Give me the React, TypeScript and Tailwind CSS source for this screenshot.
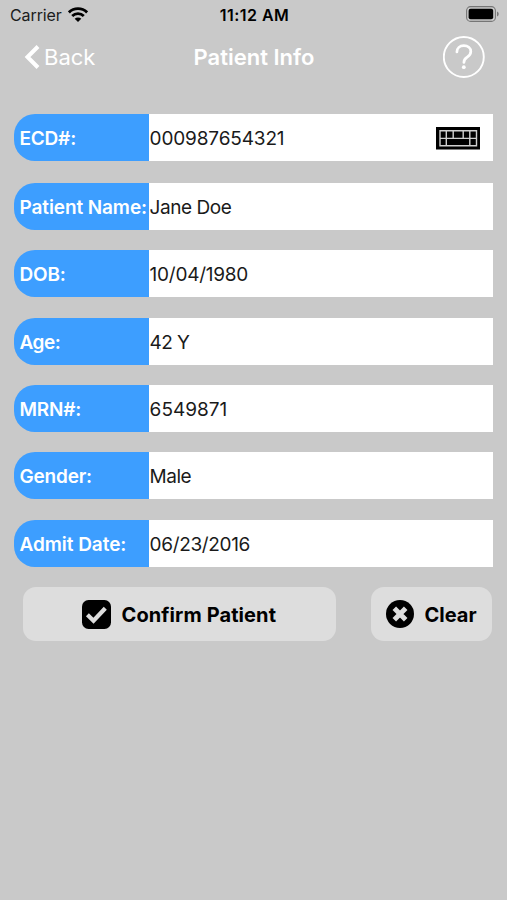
interface IField {
    label: string;
    value: string;
    gap: string;
    labelStyle: string;
    valueStyle: string;
    keyboard?: boolean;
}

const fields: IField[] = [
    { label: 'ECD#:', value: '000987654321', gap: '', labelStyle: 'tracking-[-0.2px]', valueStyle: 'tracking-[-0.15px]', keyboard: true },
    { label: 'Patient Name:', value: 'Jane Doe', gap: 'mt-[22px]', labelStyle: 'tracking-[-0.1px]', valueStyle: 'tracking-[-0.45px]' },
    { label: 'DOB:', value: '10/04/1980', gap: 'mt-5', labelStyle: 'tracking-[-0.2px]', valueStyle: 'tracking-[-0.25px]' },
    { label: 'Age:', value: '42 Y', gap: 'mt-[21px]', labelStyle: 'tracking-[-0.5px]', valueStyle: 'tracking-[-0.6px]' },
    { label: 'MRN#:', value: '6549871', gap: 'mt-5', labelStyle: 'tracking-[-0.2px]', valueStyle: '' },
    { label: 'Gender:', value: 'Male', gap: 'mt-5', labelStyle: 'tracking-[-0.2px]', valueStyle: 'tracking-[-0.5px]' },
    { label: 'Admit Date:', value: '06/23/2016', gap: 'mt-[21px]', labelStyle: 'tracking-[-0.05px]', valueStyle: 'tracking-[-0.35px]' },
];

const WifiIcon = () => (
    <svg className="mb-0.5 ml-1.5 h-[15px] w-5" viewBox="0 0 20 15" fill="none" stroke="#000" strokeWidth="2.8">
        <path d="M0.9 5.4a13 13 0 0 1 18.2 0" />
        <path d="M4.2 8.9a8.3 8.3 0 0 1 11.6 0" />
        <path d="M10 15 6.7 11.8a4.6 4.6 0 0 1 6.6 0Z" fill="#000" stroke="none" />
    </svg>
);

const BatteryIcon = () => (
    <svg className="mb-0.5 h-4 w-[33px]" viewBox="0 0 33 16" fill="none">
        <rect x="0.6" y="0.6" width="28.8" height="14.8" rx="4" stroke="#757575" strokeWidth="1.1" />
        <rect x="2.6" y="2.8" width="24.6" height="10.4" rx="2" fill="#000" />
        <path d="M31 5.5v5c1.2-.5 1.7-1.4 1.7-2.5s-.5-2-1.7-2.5Z" fill="#757575" />
    </svg>
);

const KeyboardIcon = () => (
    <svg className="mt-px h-[23px] w-11" viewBox="0 0 44 23">
        <rect width="44" height="22.5" fill="#000" />
        <path
            d="M4 3.8h36.5v15H4zM4 11.4h36.5M10.3 3.8v15M17.2 3.8v7.6M27.2 3.8v7.6M33.8 3.8v15"
            fill="none"
            stroke="#cfcfcf"
            strokeWidth="1.4"
        />
    </svg>
);

const CheckIcon = () => (
    <svg className="h-[29px] w-[29px]" viewBox="0 0 29 29">
        <rect width="29" height="29" rx="6.5" fill="#000" />
        <path d="m5.4 14.8 6.1 5.9L23.3 8.2" fill="none" stroke="#ddd" strokeWidth="4.2" />
    </svg>
);

const ClearIcon = () => (
    <svg className="h-7 w-7" viewBox="0 0 28 28">
        <circle cx="14" cy="14" r="14" fill="#000" />
        <path d="m8.3 8.3 11.4 11.4M19.7 8.3 8.3 19.7" stroke="#ddd" strokeWidth="5" />
    </svg>
);

const App = () => {
    return (
        <div className="h-[900px] w-[507px] overflow-hidden bg-[#c9c9c9] font-['Inter',sans-serif] text-black">
            {/* Status bar */}
            <div className="grid h-[30px] grid-cols-3 items-center pr-2 pl-[10px] text-base leading-none">
                <div className="flex items-center text-[#1c1c1c]">
                    <span className="tracking-[-0.1px]">Carrier</span>
                    <WifiIcon />
                </div>
                <span className="text-center font-semibold tracking-[0.45px] whitespace-nowrap">11:12 AM</span>
                <div className="flex justify-end">
                    <BatteryIcon />
                </div>
            </div>

            {/* Navigation */}
            <div className="grid h-[55px] grid-cols-3 items-center pr-[22px] pl-6 text-white">
                <button className="flex items-center text-[22px]">
                    <svg className="mr-1 mb-0.5 h-6 w-4" viewBox="0 0 16 24" fill="none">
                        <path d="M14 1.5 3.5 12 14 22.5" stroke="#fff" strokeWidth="4" />
                    </svg>
                    Back
                </button>
                <h1 className="mr-px text-center text-[22px] font-semibold whitespace-nowrap">Patient Info</h1>
                <button className="mb-0.5 justify-self-end">
                    <svg className="h-[42px] w-[42px]" viewBox="0 0 42 42" fill="none" stroke="#fff">
                        <circle cx="20.8" cy="21" r="20" strokeWidth="1.9" />
                        <path
                            d="M13.9 16c0-3.9 2.8-6.3 6.9-6.3s7 2.4 7 5.9c0 2.7-1.3 4.1-3.6 5.6-2.5 1.6-3.3 2.8-3.3 5.2"
                            strokeWidth="2.7"
                            strokeLinecap="round"
                        />
                        <circle cx="20.8" cy="31.2" r="1.9" fill="#fff" stroke="none" />
                    </svg>
                </button>
            </div>

            {/* Patient fields */}
            <div className="mt-[29px] pr-[14px] pl-[14px] text-[19px]">
                {fields.map((field) => (
                    <div key={field.label} className={`flex h-[47px] ${field.gap}`}>
                        <div className="flex w-[135px] shrink-0 items-center rounded-l-[21px] bg-[#3d9eff] pt-[3px] pl-[5.5px] font-semibold whitespace-nowrap text-white">
                            <span className={field.labelStyle}>{field.label}</span>
                        </div>
                        <div className="flex flex-1 items-center justify-between bg-white pr-[13px] pl-[0.6px] text-[#1a1a1a]">
                            <span className={`pt-[3px] ${field.valueStyle}`}>{field.value}</span>
                            {field.keyboard && <KeyboardIcon />}
                        </div>
                    </div>
                ))}
            </div>

            {/* Actions */}
            <div className="mt-5 flex justify-between pr-[15px] pl-[23px] text-xl font-bold">
                <button className="flex h-[54px] w-[313px] items-center rounded-[13px] bg-[#ddd] pl-[59px]">
                    <CheckIcon />
                    <span className="ml-[10.5px] pt-0.5 tracking-[0.1px]">Confirm Patient</span>
                </button>
                <button className="flex h-[54px] w-[121px] items-center rounded-[13px] bg-[#ddd] pl-[15px]">
                    <ClearIcon />
                    <span className="ml-[10.5px] pt-0.5">Clear</span>
                </button>
            </div>
        </div>
    );
};

export default App;
